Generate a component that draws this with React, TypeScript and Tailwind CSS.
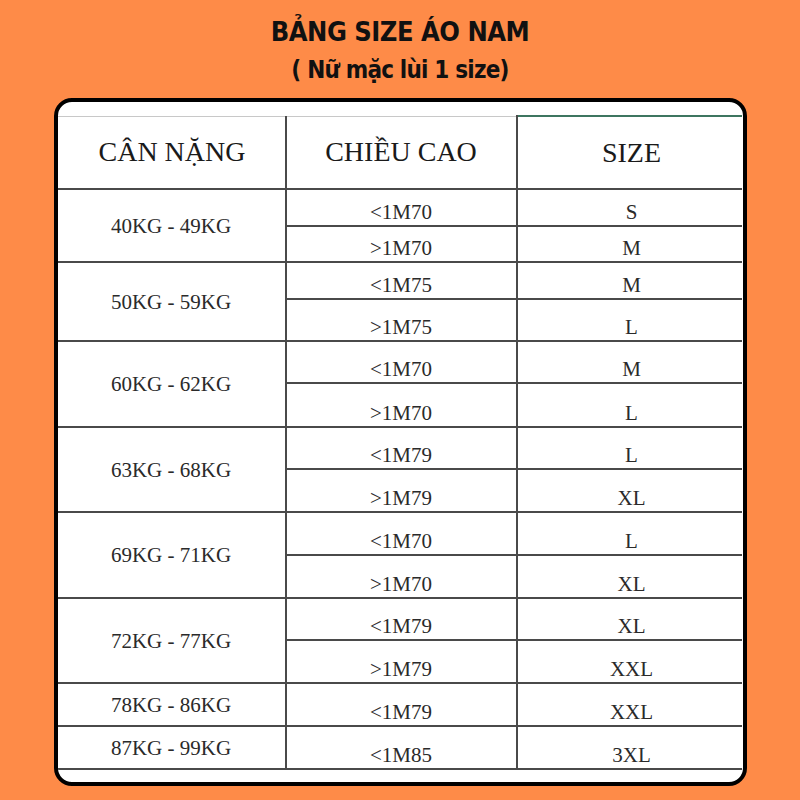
import React from "react";

type Group = { weight: string; h: number[]; rows: { height: string; size: string }[] };

const groups: Group[] = [
  { weight: "40KG - 49KG", h: [37, 36], rows: [{ height: "<1M70", size: "S" }, { height: ">1M70", size: "M" }] },
  { weight: "50KG - 59KG", h: [37, 42], rows: [{ height: "<1M75", size: "M" }, { height: ">1M75", size: "L" }] },
  { weight: "60KG - 62KG", h: [42, 44], rows: [{ height: "<1M70", size: "M" }, { height: ">1M70", size: "L" }] },
  { weight: "63KG - 68KG", h: [42, 43], rows: [{ height: "<1M79", size: "L" }, { height: ">1M79", size: "XL" }] },
  { weight: "69KG - 71KG", h: [43, 43], rows: [{ height: "<1M70", size: "L" }, { height: ">1M70", size: "XL" }] },
  { weight: "72KG - 77KG", h: [42, 43], rows: [{ height: "<1M79", size: "XL" }, { height: ">1M79", size: "XXL" }] },
  { weight: "78KG - 86KG", h: [43], rows: [{ height: "<1M79", size: "XXL" }] },
  { weight: "87KG - 99KG", h: [43], rows: [{ height: "<1M85", size: "3XL" }] },
];

const serif = "font-['Liberation_Serif','Times_New_Roman',serif]";

export default function App() {
  return (
    <div className="w-[800px] h-[800px] bg-[#fe8b48] flex flex-col items-center overflow-hidden">
      <div className="h-[98px] w-full flex flex-col items-center pt-[14px] text-[#111] font-['DejaVu_Sans_Condensed','DejaVu_Sans',sans-serif] font-bold">
        <div className="text-[27px] leading-[36px] tracking-[-0.5px]">BẢNG SIZE ÁO NAM</div>
        <div className="text-[24px] leading-[36px] mt-[2px] tracking-[-0.8px]">( Nữ mặc lùi 1 size)</div>
      </div>
      <div className="w-[693px] h-[688px] border-[4px] border-black rounded-[18px] bg-white overflow-hidden pt-[13px]">
        <table className={`${serif} border-collapse table-fixed w-[684px]`}>
          <colgroup>
            <col className="w-[228px]" />
            <col className="w-[231px]" />
            <col className="w-[225px]" />
          </colgroup>
          <thead>
            <tr className="h-[73px]">
              <th className="border-t-[1.5px] border-t-[#c8c8c8] border-r-[2px] border-r-[#4a4a4a] border-b-[2px] border-b-[#4a4a4a] text-[28px] font-normal text-[#1a1a1a] align-middle p-0 pl-[2px]">
                CÂN NẶNG
              </th>
              <th className="border-t-[1.5px] border-t-[#c8c8c8] border-r-[2px] border-r-[#4a4a4a] border-b-[2px] border-b-[#4a4a4a] text-[28px] font-normal text-[#1a1a1a] align-middle p-0">
                CHIỀU CAO
              </th>
              <th className="border-t-[2px] border-t-[#3d7560] border-b-[2px] border-b-[#4a4a4a] text-[28px] font-normal text-[#1a1a1a] align-middle p-0 pl-[4px]">
                SIZE
              </th>
            </tr>
          </thead>
          <tbody>
            {groups.map((g) =>
              g.rows.map((r, i) => (
                <tr key={g.weight + i} style={{ height: g.h[i] }}>
                  {i === 0 && (
                    <td
                      rowSpan={g.rows.length}
                      className="border-r-[2px] border-r-[#4a4a4a] border-b-[2px] border-b-[#4a4a4a] text-center align-middle text-[21px] text-[#2a2a2a] p-0 leading-[24px]"
                    >
                      {g.weight}
                    </td>
                  )}
                  <td className="border-r-[2px] border-r-[#4a4a4a] border-b-[2px] border-b-[#4a4a4a] text-center align-bottom text-[21px] text-[#2a2a2a] p-0 pb-[1px] leading-[24px]">
                    {r.height}
                  </td>
                  <td className="border-b-[2px] border-b-[#4a4a4a] text-center align-bottom text-[21px] text-[#2a2a2a] p-0 pb-[1px] pl-[4px] leading-[24px]">
                    {r.size}
                  </td>
                </tr>
              ))
            )}
          </tbody>
        </table>
      </div>
    </div>
  );
}
